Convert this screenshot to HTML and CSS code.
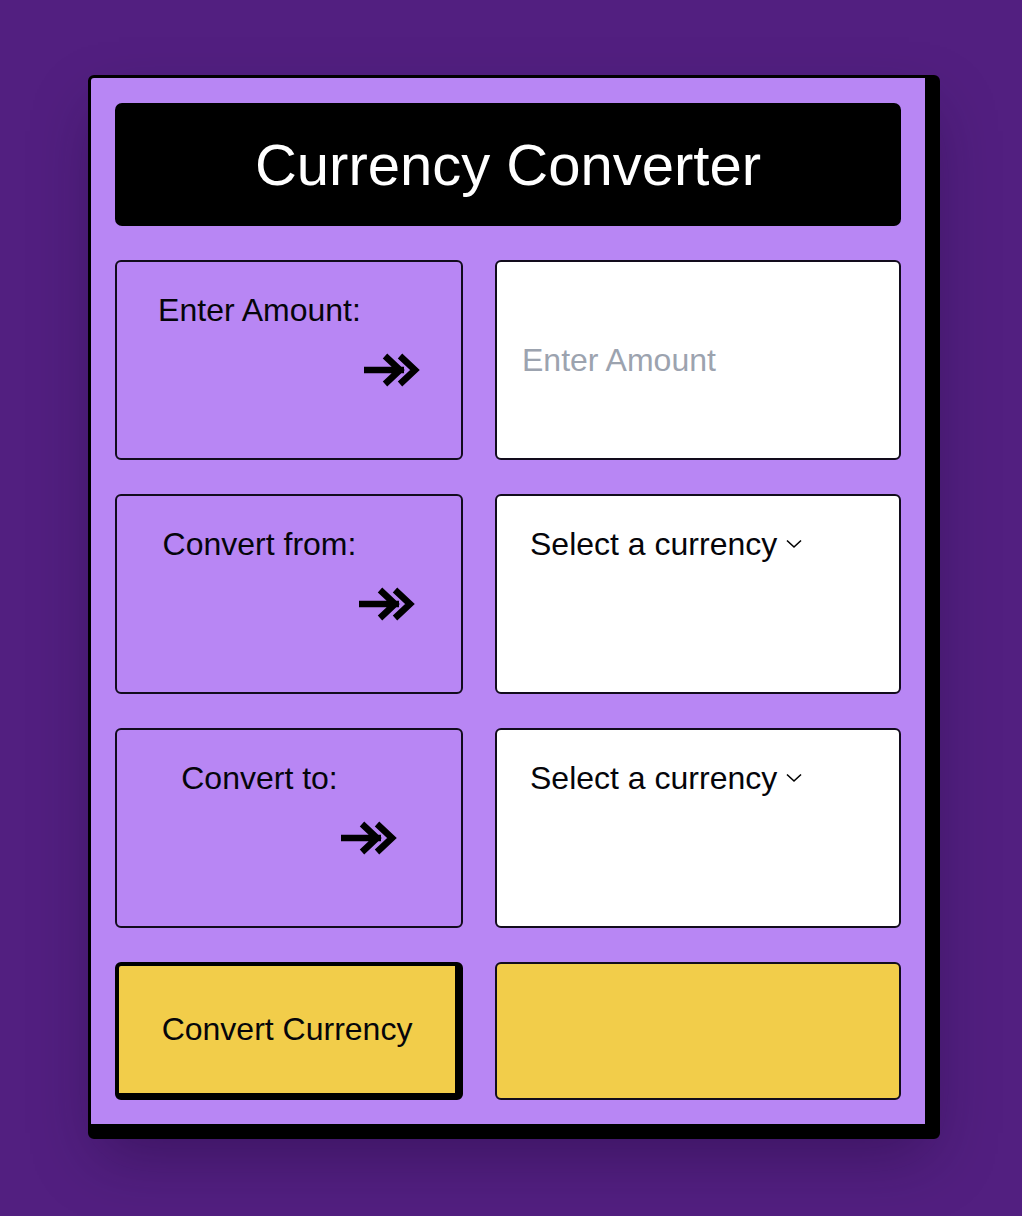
FILE: index.html
```html
<!DOCTYPE html>
<html lang="en">
<head>
<meta charset="utf-8">
<title>Currency Converter</title>
<link rel="stylesheet" href="styles.css">
</head>
<body>
<div class="page">
  <main class="card">
    <h1 class="title">Currency Converter</h1>
    <div class="grid">
      <div class="label-box">
        <span class="label-text">Enter Amount:</span>
        <svg class="arrow" width="56" height="36" viewBox="0 0 56 36" aria-hidden="true"><path d="M0 18H40M21 4L36 18L21 32M36 4L51 18L36 32" fill="none" stroke="#000" stroke-width="6.5" stroke-linejoin="miter"/></svg>
      </div>
      <div class="field-box input-box">
        <input class="amount" type="text" placeholder="Enter Amount">
      </div>

      <div class="label-box">
        <span class="label-text">Convert from:</span>
        <svg class="arrow" width="56" height="36" viewBox="0 0 56 36" aria-hidden="true"><path d="M0 18H40M21 4L36 18L21 32M36 4L51 18L36 32" fill="none" stroke="#000" stroke-width="6.5" stroke-linejoin="miter"/></svg>
      </div>
      <div class="field-box select-box">
        <span class="select-text">Select a currency</span>
        <svg class="chev" width="16" height="10" viewBox="0 0 16 10" aria-hidden="true"><path d="M1 1.5L8 8L15 1.5" fill="none" stroke="#000" stroke-width="1.6"/></svg>
      </div>

      <div class="label-box">
        <span class="label-text">Convert to:</span>
        <svg class="arrow" width="56" height="36" viewBox="0 0 56 36" aria-hidden="true"><path d="M0 18H40M21 4L36 18L21 32M36 4L51 18L36 32" fill="none" stroke="#000" stroke-width="6.5" stroke-linejoin="miter"/></svg>
      </div>
      <div class="field-box select-box">
        <span class="select-text">Select a currency</span>
        <svg class="chev" width="16" height="10" viewBox="0 0 16 10" aria-hidden="true"><path d="M1 1.5L8 8L15 1.5" fill="none" stroke="#000" stroke-width="1.6"/></svg>
      </div>

      <button class="convert-btn" type="button">Convert Currency</button>
      <div class="result-box"></div>
    </div>
  </main>
</div>
</body>
</html>
```

FILE: styles.css
```css
* { box-sizing: border-box; }

html, body {
  margin: 0;
  padding: 0;
  background: #521f80;
  font-family: "Liberation Sans", Arial, sans-serif;
}

.page {
  padding: 75px 0 0 88px;
  min-height: 1216px;
}

.card {
  width: 852px;
  background: #b886f4;
  border-style: solid;
  border-color: #000;
  border-width: 3px 15px 15px 3px;
  border-radius: 6px;
  padding: 25px 24px 24px 24px;
  box-shadow: 0 25px 60px -10px rgba(20, 0, 40, 0.35);
}

.title {
  margin: 0 0 34px 0;
  height: 123px;
  background: #000;
  color: #fff;
  border-radius: 7px;
  display: flex;
  align-items: center;
  justify-content: center;
  font-size: 58px;
  font-weight: 400;
  line-height: 1;
}

.grid {
  display: grid;
  grid-template-columns: 6fr 7fr;
  grid-template-rows: 200px 200px 200px 138px;
  column-gap: 32px;
  row-gap: 34px;
}

.label-box {
  border: 2px solid #120c1c;
  border-radius: 6px;
  display: flex;
  justify-content: center;
  align-items: flex-start;
  padding-top: 29px;
}

.label-text {
  font-size: 32px;
  line-height: 38px;
  color: #05050a;
}

.arrow {
  display: block;
  margin-top: 61px;
  margin-left: 3px;
  flex: none;
}

.field-box {
  background: #fff;
  border: 2px solid #120c1c;
  border-radius: 6px;
}

.input-box {
  display: flex;
  align-items: center;
  padding: 0 24px 0 25px;
}

.amount {
  width: 100%;
  border: none;
  outline: none;
  background: transparent;
  padding: 0;
  font-family: "Liberation Sans", Arial, sans-serif;
  font-size: 32px;
  line-height: 38px;
  color: #111;
}

.amount::placeholder {
  color: #9ca3af;
}

.select-box {
  display: flex;
  align-items: flex-start;
  padding: 29px 0 0 33px;
}

.select-text {
  font-size: 32px;
  line-height: 38px;
  color: #05050a;
}

.chev {
  display: block;
  margin: 14px 0 0 9px;
}

.convert-btn {
  background: #f2cd4a;
  border-style: solid;
  border-color: #000;
  border-width: 4px 8px 7px 4px;
  border-radius: 6px;
  font-family: "Liberation Sans", Arial, sans-serif;
  font-size: 32px;
  color: #05050a;
  padding: 0;
  cursor: pointer;
}

.result-box {
  background: #f2cd4a;
  border: 2px solid #120c1c;
  border-radius: 6px;
}
```
